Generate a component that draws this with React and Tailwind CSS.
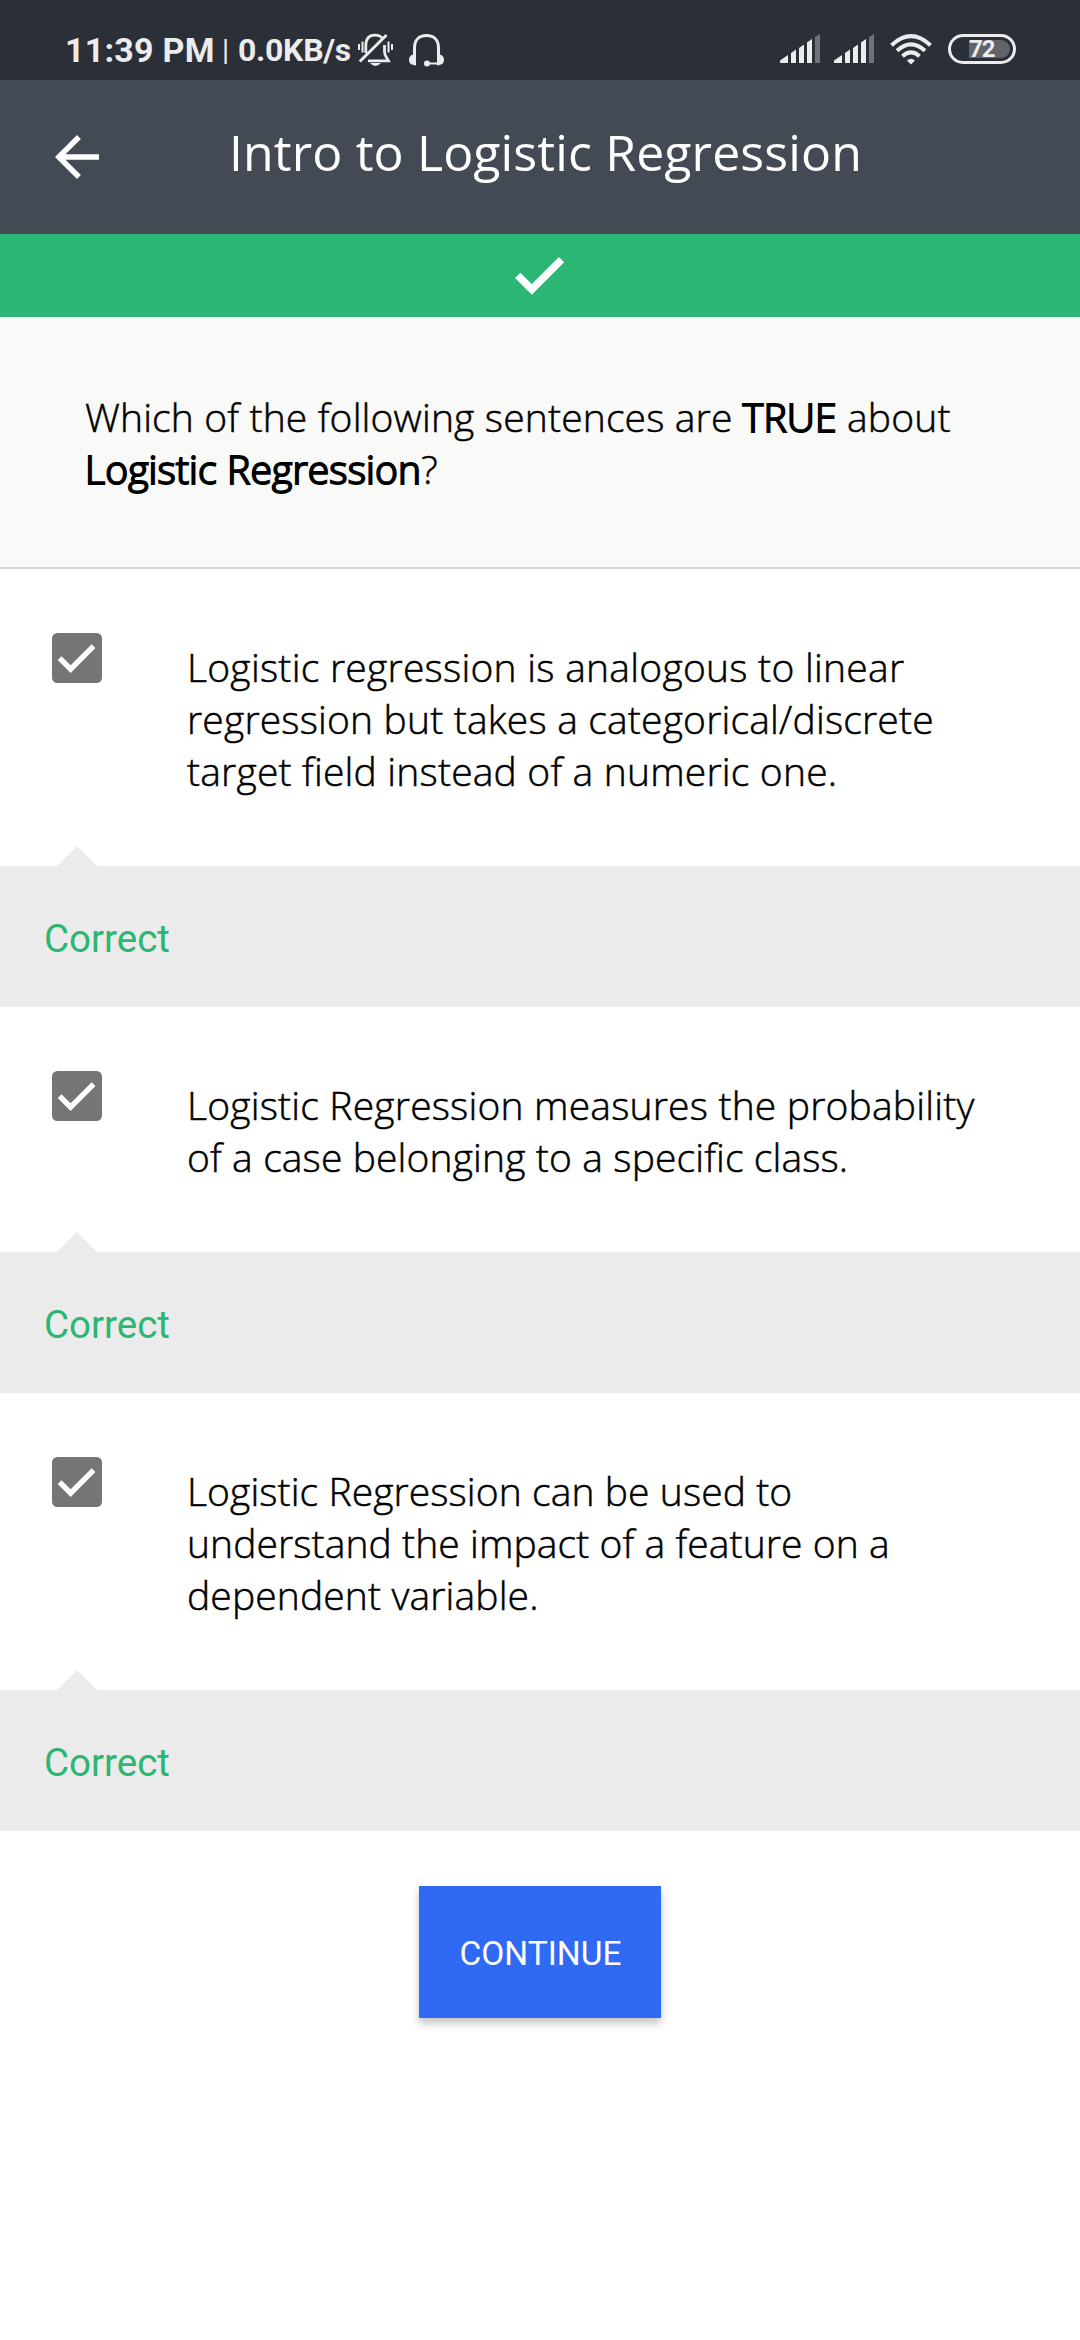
const ITEMS = [
  [
    { text: "Logistic regression is analogous to linear", tracking: "tracking-[0.25px]" },
    { text: "regression but takes a categorical/discrete", tracking: "tracking-[0.18px]" },
    { text: "target field instead of a numeric one.", tracking: "tracking-[0.19px]" },
  ],
  [
    { text: "Logistic Regression measures the probability", tracking: "tracking-[0.19px]" },
    { text: "of a case belonging to a specific class.", tracking: "tracking-[0.13px]" },
  ],
  [
    { text: "Logistic Regression can be used to", tracking: "tracking-[0.09px]" },
    { text: "understand the impact of a feature on a", tracking: "tracking-[0.09px]" },
    { text: "dependent variable.", tracking: "tracking-[0.13px]" },
  ],
];

function Signal() {
  return (
    <svg width="40" height="30" viewBox="0 0 40 30" fill="#ececec">
      <path d="M0 29v-2.500l8-5.500v8z" />
      <path d="M11 29V19l5-3.500V29z" />
      <path d="M19 29V14l5-3.500V29z" />
      <path d="M27 29V8.500L32 5v24z" />
      <path d="M35 29V3l5-3v29z" fill="#707276" />
    </svg>
  );
}

function Wifi() {
  return (
    <svg width="42" height="31" viewBox="0 0 42 31" fill="none" stroke="#ececec" strokeWidth="4">
      <path d="M1.500 11.200Q21-7 40.500 11.200" />
      <path d="M7 16.800Q21 4 35 16.800" />
      <path d="M12.500 22.200Q21 14.500 29.500 22.200" />
      <path d="M21 30.500l-4-4q4-3.600 8 0z" fill="#ececec" stroke="none" />
    </svg>
  );
}

function MutedBell() {
  return (
    <svg width="35" height="34" viewBox="0 0 35 34" fill="none" stroke="#ececec" strokeWidth="2.800">
      <path d="M7.800 20V13C7.800 6 11 2.200 17 2.200c4 0 6.500 1.500 8 4M26.500 12v7c0 4 2 5 4 8.800H10" />
      <path d="M1.800 28.500L28.500 2" strokeWidth="3" />
      <path d="M1 11v6M4.500 8.500v11M30.500 8.500v11M34 11v6" strokeWidth="2" />
      <path d="M12 30h11q-5.500 6-11 0z" fill="#ececec" stroke="none" />
    </svg>
  );
}

function Headset() {
  return (
    <svg width="35" height="33" viewBox="0 0 35 33" fill="none" stroke="#ececec" strokeWidth="3">
      <path d="M5.500 30V14C5.500 6 10 1.500 17.500 1.500S29.500 6 29.500 14v16" />
      <path d="M18 29.500h11" strokeWidth="2" />
      <circle cx="18" cy="29.500" r="3" fill="#ececec" stroke="none" />
      <path d="M7 21v10q-1 1-2 0-5-.5-5-5t4-5.500zM28 21v10q1 1 2 0 5-.5 5-5t-4-5.500z" fill="#ececec" stroke="none" />
    </svg>
  );
}

function StatusBar() {
  return (
    <div className="flex h-20 items-start bg-[#2b2f37] pl-[65px] pr-16 pt-[33px] text-[#ececec]">
      <div className="flex h-[34px] flex-1 items-center font-bold leading-none whitespace-nowrap">
        <span className="w-[157px] text-[34px] tracking-[0.25px]">11:39 PM</span>
        <span className="w-[16px] text-[29px] font-normal">|</span>
        <span className="w-[120px] text-[32px] tracking-[-0.3px]">0.0KB/s</span>
        <MutedBell />
        <div className="w-4" />
        <Headset />
      </div>
      <div className="flex items-start gap-4 pt-px">
        <div className="flex gap-[14px]">
          <Signal />
          <Signal />
        </div>
        <Wifi />
        <div className="flex h-[30px] w-[68px] items-center rounded-full border-3 border-[#ececec] pl-[18px]">
          <div className="flex h-[18px] w-[41px] items-center rounded-r-full bg-[#606368] text-[24px] font-bold leading-none tracking-[-1px]">
            72
          </div>
        </div>
      </div>
    </div>
  );
}

function Answer({ lines }) {
  return (
    <section>
      <div className="flex items-start bg-white pb-[69px] pl-[52px] pt-16">
        <svg width="50" height="50" viewBox="0 0 50 50" className="shrink-0">
          <rect width="50" height="50" rx="5.500" fill="#757575" />
          <path d="M7.600 25.200L18.600 36.200L41.600 13.200" fill="none" stroke="#fff" strokeWidth="5.400" />
        </svg>
        <p className="ml-[85px] pt-2 font-['Open_Sans',sans-serif] text-[39px] font-light leading-[52px] whitespace-nowrap text-black [-webkit-text-stroke:0.5px_black]">
          {lines.map(({ text, tracking }) => (
            <span key={text} className={`block ${tracking}`}>{text}</span>
          ))}
        </p>
      </div>
      <div className="relative flex h-[141px] items-center bg-[#ebebeb] pl-11 pt-[5px] text-[38.5px] text-[#2bb673]">
        <svg width="40" height="20" viewBox="0 0 40 20" className="absolute -top-5 left-[57px]">
          <path d="M0 20L20 0l20 20z" fill="#ebebeb" />
        </svg>
        Correct
      </div>
    </section>
  );
}

export default function App() {
  return (
    <main className="min-h-[2340px] w-[1080px] overflow-hidden bg-white font-['Roboto',sans-serif]">
      <StatusBar />
      <header className="flex h-[154px] items-start bg-[#444a54] pl-[55px] text-white">
        <svg width="44" height="44" viewBox="4 4 16 16" fill="#fff" className="mt-[55px]">
          <path d="M20 11H7.830l5.590-5.590L12 4l-8 8 8 8 1.410-1.410L7.830 13H20v-2z" />
        </svg>
        <h1 className="ml-[130px] mt-[37px] font-['Open_Sans',sans-serif] text-[50px] leading-[70px] tracking-[0.12px] whitespace-nowrap">
          Intro to Logistic Regression
        </h1>
      </header>
      <div className="flex h-[83px] items-center justify-center bg-[#2bb673]">
        <svg width="50" height="38" viewBox="0 0 50 38">
          <path d="M2.700 18.300L16.800 32.400L46.500 2.700" fill="none" stroke="#fff" strokeWidth="7.500" />
        </svg>
      </div>
      <div className="h-[252px] border-b-2 border-[#d6d8d7] bg-[#f9f9f7] pl-[85px] pt-[74px]">
        <p className="font-['Open_Sans',sans-serif] text-[39px] font-light leading-[52px] tracking-[0.16px] whitespace-nowrap text-black [-webkit-text-stroke:0.5px_black]">
          Which of the following sentences are <span className="[-webkit-text-stroke:2px_black]">TRUE</span> about
          <br />
          <span className="[-webkit-text-stroke:2px_black]">Logistic Regression</span>?
        </p>
      </div>
      {ITEMS.map((lines) => (
        <Answer key={lines[0].text} lines={lines} />
      ))}
      <div className="flex justify-center pt-[55px]">
        <button className="h-[132px] w-[242px] bg-[#3069f4] pt-1 pl-px text-[33.5px] text-white shadow-[0_5px_8px_rgba(0,0,0,0.24)]">
          CONTINUE
        </button>
      </div>
    </main>
  );
}
